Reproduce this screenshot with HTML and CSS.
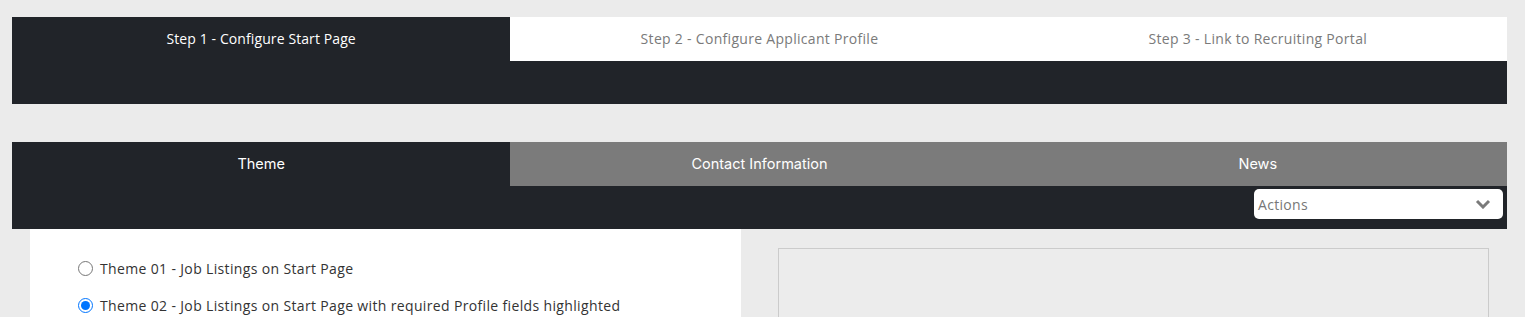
FILE: index.html
```html
<!DOCTYPE html>
<html lang="en">
<head>
  <meta charset="UTF-8" />
  <title>Configure Start Page</title>
  <link rel="stylesheet" href="styles.css">
</head>
<body>
  <div class="page">
    <!-- Wizard steps -->
    <div class="steps">
      <div class="step-tabs">
        <div class="step active">Step 1 - Configure Start Page</div>
        <div class="step">Step 2 - Configure Applicant Profile</div>
        <div class="step">Step 3 - Link to Recruiting Portal</div>
      </div>
      <div class="step-bar"></div>
    </div>

    <!-- Section tabs -->
    <div class="sections">
      <div class="section-tabs">
        <div class="section active">Theme</div>
        <div class="section">Contact Information</div>
        <div class="section">News</div>
      </div>
      <div class="section-bar">
        <div class="actions">
          <span>Actions</span>
          <svg width="16" height="10" viewBox="0 0 16 10"><path d="M2 2 L8 8 L14 2" fill="none" stroke="#7a7a7a" stroke-width="3"/></svg>
        </div>
      </div>
    </div>

    <div class="content">
      <div class="themes">
        <label class="theme"><input type="radio" name="theme" /> Theme 01 - Job Listings on Start Page</label>
        <label class="theme"><input type="radio" name="theme" checked /> Theme 02 - Job Listings on Start Page with required Profile fields highlighted</label>
      </div>
      <div class="preview-wrap">
        <div class="preview"></div>
      </div>
    </div>
  </div>
</body>
</html>
```

FILE: styles.css
```css
body {
  margin: 0;
  background: #ebebeb;
  font-family: 'Noto Sans', sans-serif;
  font-size: 14px;
}
.page {
  padding: 17px 18px 0 12px;
}
.steps, .sections {
  background: #212429;
}
.step-tabs, .section-tabs {
  display: flex;
}
.step, .section {
  flex: 1;
  height: 44px;
  line-height: 44px;
  text-align: center;
}
.step {
  background: #fff;
  color: #7a7a7a;
  font-family: 'Open Sans', sans-serif;
  letter-spacing: 0.3px;
}
.step.active {
  background: #212429;
  color: #fff;
  letter-spacing: 0.1px;
}
.step-bar {
  height: 43px;
}
.sections {
  margin-top: 38px;
}
.section {
  background: #7b7b7b;
  color: #fff;
  font-family: 'Inter', sans-serif;
  font-size: 14.5px;
}
.section.active {
  background: #212429;
}
.section-bar {
  height: 43px;
  display: flex;
  justify-content: flex-end;
  align-items: flex-start;
  padding-right: 4px;
}
.actions {
  margin-top: 3px;
  width: 249px;
  height: 30px;
  background: #fff;
  border-radius: 5px;
  display: flex;
  align-items: center;
  justify-content: space-between;
  padding: 0 12px 0 4px;
  box-sizing: border-box;
  color: #777;
  font-family: 'Open Sans', sans-serif;
  letter-spacing: 0.3px;
}
.content {
  display: flex;
}
.themes {
  background: #fff;
  margin-left: 18px;
  width: 711px;
  height: 88px;
  padding: 29px 0 0 48px;
  box-sizing: border-box;
}
.theme {
  display: flex;
  align-items: center;
  gap: 7px;
  height: 20px;
  margin-bottom: 17px;
  color: #333;
  font-family: 'Open Sans', sans-serif;
  font-size: 14px;
  letter-spacing: 0.35px;
}
.theme input {
  margin: 0;
  width: 15px;
  height: 15px;
}
.preview-wrap {
  flex: 1;
  padding: 19px 18px 0 37px;
}
.preview {
  border: 1px solid #cbcbcb;
  border-bottom: none;
  background: #ececec;
  height: 80px;
}
```
